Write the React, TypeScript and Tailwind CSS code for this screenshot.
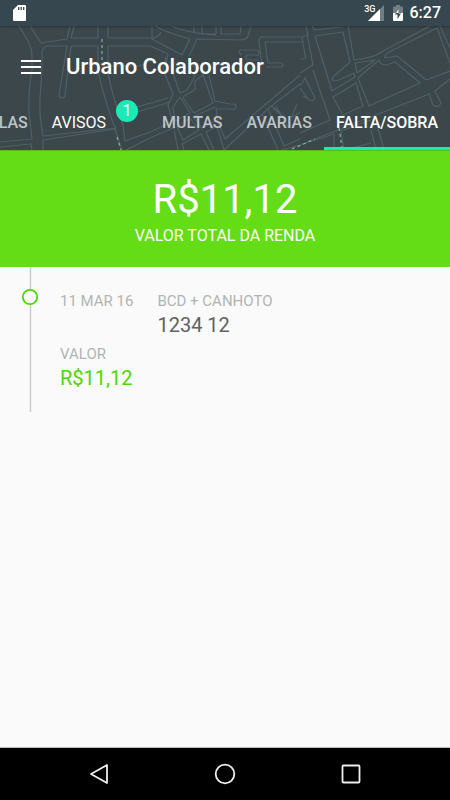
import React, { useState } from 'react';

interface Tab {
  id: string;
  label: string;
  badge?: number;
}

interface Entry {
  date: string;
  kind: string;
  code: string;
  value: string;
}

const tabs: Tab[] = [
  { id: 'las', label: 'LAS' },
  { id: 'avisos', label: 'AVISOS', badge: 1 },
  { id: 'multas', label: 'MULTAS' },
  { id: 'avarias', label: 'AVARIAS' },
  { id: 'falta', label: 'FALTA/SOBRA' },
];

const entries: Entry[] = [
  { date: '11 MAR 16', kind: 'BCD + CANHOTO', code: '1234 12', value: 'R$11,12' },
];

const StatusBar: React.FC = () => (
  <div className="relative z-10 flex h-[26px] items-center bg-[#37474f] pr-[9px] pl-[13px] shadow-[0_1px_2px_rgba(0,0,0,0.3)]">
    <svg className="h-4 w-[13px]" viewBox="0 0 13 16" fill="none">
      <path d="M5 0h7q1 0 1 1v14q0 1-1 1H1q-1 0-1-1V5z" fill="#fff" />
      <path d="M5.7 2v3M8.2 2v3M10.7 2v3" stroke="#37474f" strokeWidth="1.3" />
    </svg>
    <div className="ml-auto flex items-center">
      <span className="mb-2 text-[9px] leading-none font-medium">3G</span>
      <svg className="-ml-2 h-4 w-4" viewBox="0 0 16 16">
        <path d="M16 0v16H0z" fill="#fff" opacity=".3" />
        <path d="M12 4v12H0z" fill="#fff" />
      </svg>
      <svg className="ml-[9px] h-4 w-[10px]" viewBox="0 0 10 16">
        <path d="M3 0h4v1.5h2q1 0 1 1V8H0V2.500q0-1 1-1h2z" fill="#fff" opacity=".3" />
        <path d="M0 8h10v7q0 1-1 1H1q-1 0-1-1z" fill="#fff" />
        <path d="M5.500 4v4.500H8L4.500 14V9.500H2z" fill="#37474f" />
        <path d="M5.500 4v4H3z" fill="#fff" />
      </svg>
      <span className="ml-[7px] text-base leading-5 font-medium">6:27</span>
    </div>
  </div>
);

const StreetMap: React.FC = () => (
  <svg
    className="absolute inset-0 h-full w-full"
    viewBox="0 26 450 124"
    preserveAspectRatio="xMidYMid slice"
    fill="none"
    stroke="#4e6069"
    strokeWidth="1.2"
    strokeLinejoin="round"
    aria-hidden="true"
  >
    <path d="M19 26 28 41Q32 48 32 57V70Q28 93 29 112L32 139 0 142M0 147 31 144 32 150" />
    <path d="M30 26 41 43 67 39 70 26M74 26 71 38H98V26M108 26V38H152Q158 38 161 32" />
    <path d="M42 60V52Q43 46 49 46H67L59 95Q59 98 62 98T65 95L71 46H98V68Q99 81 113 123L116 128 43 136Q39 115 40 97Q42 77 42 60" />
    <path d="M43 150V140L115 129 122 150M108 46H150L168 54 166 64M108 46V66H140L152 60M108 70Q109 86 123 125L125 141 150 132 172 122" />
    <path d="M137 107 168 98M137 112 170 102M126 150 150 138 173 128" />
    <path d="M152 26V39L182 55 190 39Q165 32 155 26M172 26Q186 33 216 35M194 26V33M202 26V34H216V26M221 26V34L240 34 241 26M251 26 248 36Q247 39 242 40L197 39 189 56" />
    <path d="M166 57 163 69 173 94 168 105 173 124 178 150M173 57 171 68 180 93 187 90 194 78 196 69 189 60" />
    <path d="M184 96 195 90V81L203 75 213 103 194 113 183 98ZM173 107 180 97 190 113 175 121ZM209 75 215 101 230 104H233Q236 104 236 107T233 109H216L218 120 202 128 193 117 215 107M177 127 190 118 199 130 183 140Z" />
    <path d="M184 150 182 144 201 134 209 150M218 122 225 139 300 75M214 150 206 132 217 126 224 150 270 107 300 84" />
    <path d="M240 50H256Q259 50 259 53T256 55H246V60H258M240 50Q238 53 242 55M266 67H281Q284 66 282 63H268L265 42H303M262 66 259 41Q259 36 264 37H301" />
    <path d="M268 109 284 146 300 139M272 106 286 119 273 108M276 106 288 127 300 121M297 104 291 118 300 112M262 114 278 150" />
    <path d="M300 59H303Q307 58 305 55L302 37 308 35 306 26M307 33 313 65 300 73M312 26 314 30 341 27M315 36 343 32 350 62 334 76Q330 79 334 81L339 80 354 73 355 77 332 91ZM348 26 354 60Q374 58 383 51L430 26" />
    <path d="M313 70 330 120 300 133M300 86 305 78 315 98Q313 102 309 100L300 88M333 97 356 83 363 106 343 115ZM355 63 375 60 357 73ZM358 78 379 60 381 64 386 65 395 62 420 83 369 106ZM384 58 397 56 407 64 426 80 450 71M384 58 387 53 437 28 450 63M440 26 450 48M450 79 435 91 441 103Q438 109 433 105L429 94 300 145M303 96 309 99" />
    <path d="M300 145 334 134V150M341 131 344 150 371 143M371 130 376 150M378 128 384 150M281 150 300 145M341 131 371 120" />
    <path d="M102 39V65M117 137 121 150M339 128 342 148M292 149 315 139" stroke="#7bb79b" strokeDasharray="3 3" />
  </svg>
);

const App: React.FC = () => {
  const [active, setActive] = useState('falta');

  return (
    <div className="flex min-h-screen flex-col bg-[#fafafa] font-[Roboto,sans-serif]">
      <header className="text-white">
        <StatusBar />
        <div className="relative bg-[#3b474b]">
          <StreetMap />
          <div className="relative flex h-[74px] items-center gap-6 px-5 pt-[7px]">
            <button type="button" aria-label="Menu" className="h-[22px] w-[22px]">
              <svg viewBox="0 0 22 22" className="h-full w-full" stroke="#fff" strokeWidth="2">
                <path d="M1 5h20M1 11h20M1 17h20" />
              </svg>
            </button>
            <h1 className="text-[22px] leading-8 font-medium">Urbano Colaborador</h1>
          </div>
          <nav className="relative flex h-[50px] justify-end overflow-hidden">
            {tabs.map((tab) => (
              <button
                key={tab.id}
                type="button"
                onClick={() => setActive(tab.id)}
                className={`flex shrink-0 items-start border-b-[3px] px-3 text-base leading-6 font-medium ${
                  active === tab.id ? 'border-[#1de9b6]' : 'border-transparent'
                }`}
              >
                <span
                  className={`mt-[11px] ${
                    tab.badge ? 'font-normal text-white' : active === tab.id ? 'text-white' : 'text-[#bfc4c6]'
                  }`}
                >
                  {tab.label}
                </span>
                {tab.badge && (
                  <span className="ml-[10px] flex h-[22px] w-[22px] items-center justify-center rounded-full bg-[#1de9b6] text-base font-normal">
                    {tab.badge}
                  </span>
                )}
              </button>
            ))}
          </nav>
        </div>
      </header>

      <section className="flex flex-col items-center border-t border-[#55bb1b] bg-[#64dd17] pt-[25px] pb-[19px] text-white">
        <p className="text-[40px] leading-[48px]">R$11,12</p>
        <h2 className="text-base leading-6">VALOR TOTAL DA RENDA</h2>
      </section>

      <main className="px-[22px]">
        {entries.map((entry) => (
          <article key={entry.code} className="flex h-[145px] gap-[22px]">
            <svg className="h-full w-4 shrink-0" viewBox="0 0 16 145" fill="none">
              <path d="M8.500 0v145" stroke="#ccc" strokeWidth="1.500" />
              <circle cx="8" cy="30" r="7.200" fill="#fafafa" stroke="#4cd900" strokeWidth="1.800" />
            </svg>
            <div className="flex flex-col gap-[5px] pt-[22px]">
              <div className="flex gap-6 text-[15px] leading-6 text-[#b3b3b3]">
                <p>{entry.date}</p>
                <div>
                  <p>{entry.kind}</p>
                  <p className="text-xl leading-6 text-[#616161]">{entry.code}</p>
                </div>
              </div>
              <div className="text-[15px] leading-6 text-[#b3b3b3]">
                <p>VALOR</p>
                <p className="text-xl leading-6 text-[#4cd900]">{entry.value}</p>
              </div>
            </div>
          </article>
        ))}
      </main>

      <footer className="mt-auto flex h-[53px] items-center justify-center gap-[102px] border-t border-[#bbb] bg-black">
        <button type="button" aria-label="Voltar">
          <svg className="h-6 w-6" viewBox="0 0 24 24" fill="none" stroke="#eee" strokeWidth="1.800" strokeLinejoin="round">
            <path d="M20 3v18L4 12z" />
          </svg>
        </button>
        <button type="button" aria-label="Início">
          <svg className="h-6 w-6" viewBox="0 0 24 24" fill="none" stroke="#eee" strokeWidth="1.800">
            <circle cx="12" cy="12" r="9.300" />
          </svg>
        </button>
        <button type="button" aria-label="Recentes">
          <svg className="h-6 w-6" viewBox="0 0 24 24" fill="none" stroke="#eee" strokeWidth="1.800">
            <rect x="3.500" y="3.500" width="17" height="17" rx="1" />
          </svg>
        </button>
      </footer>
    </div>
  );
};

export default App;
